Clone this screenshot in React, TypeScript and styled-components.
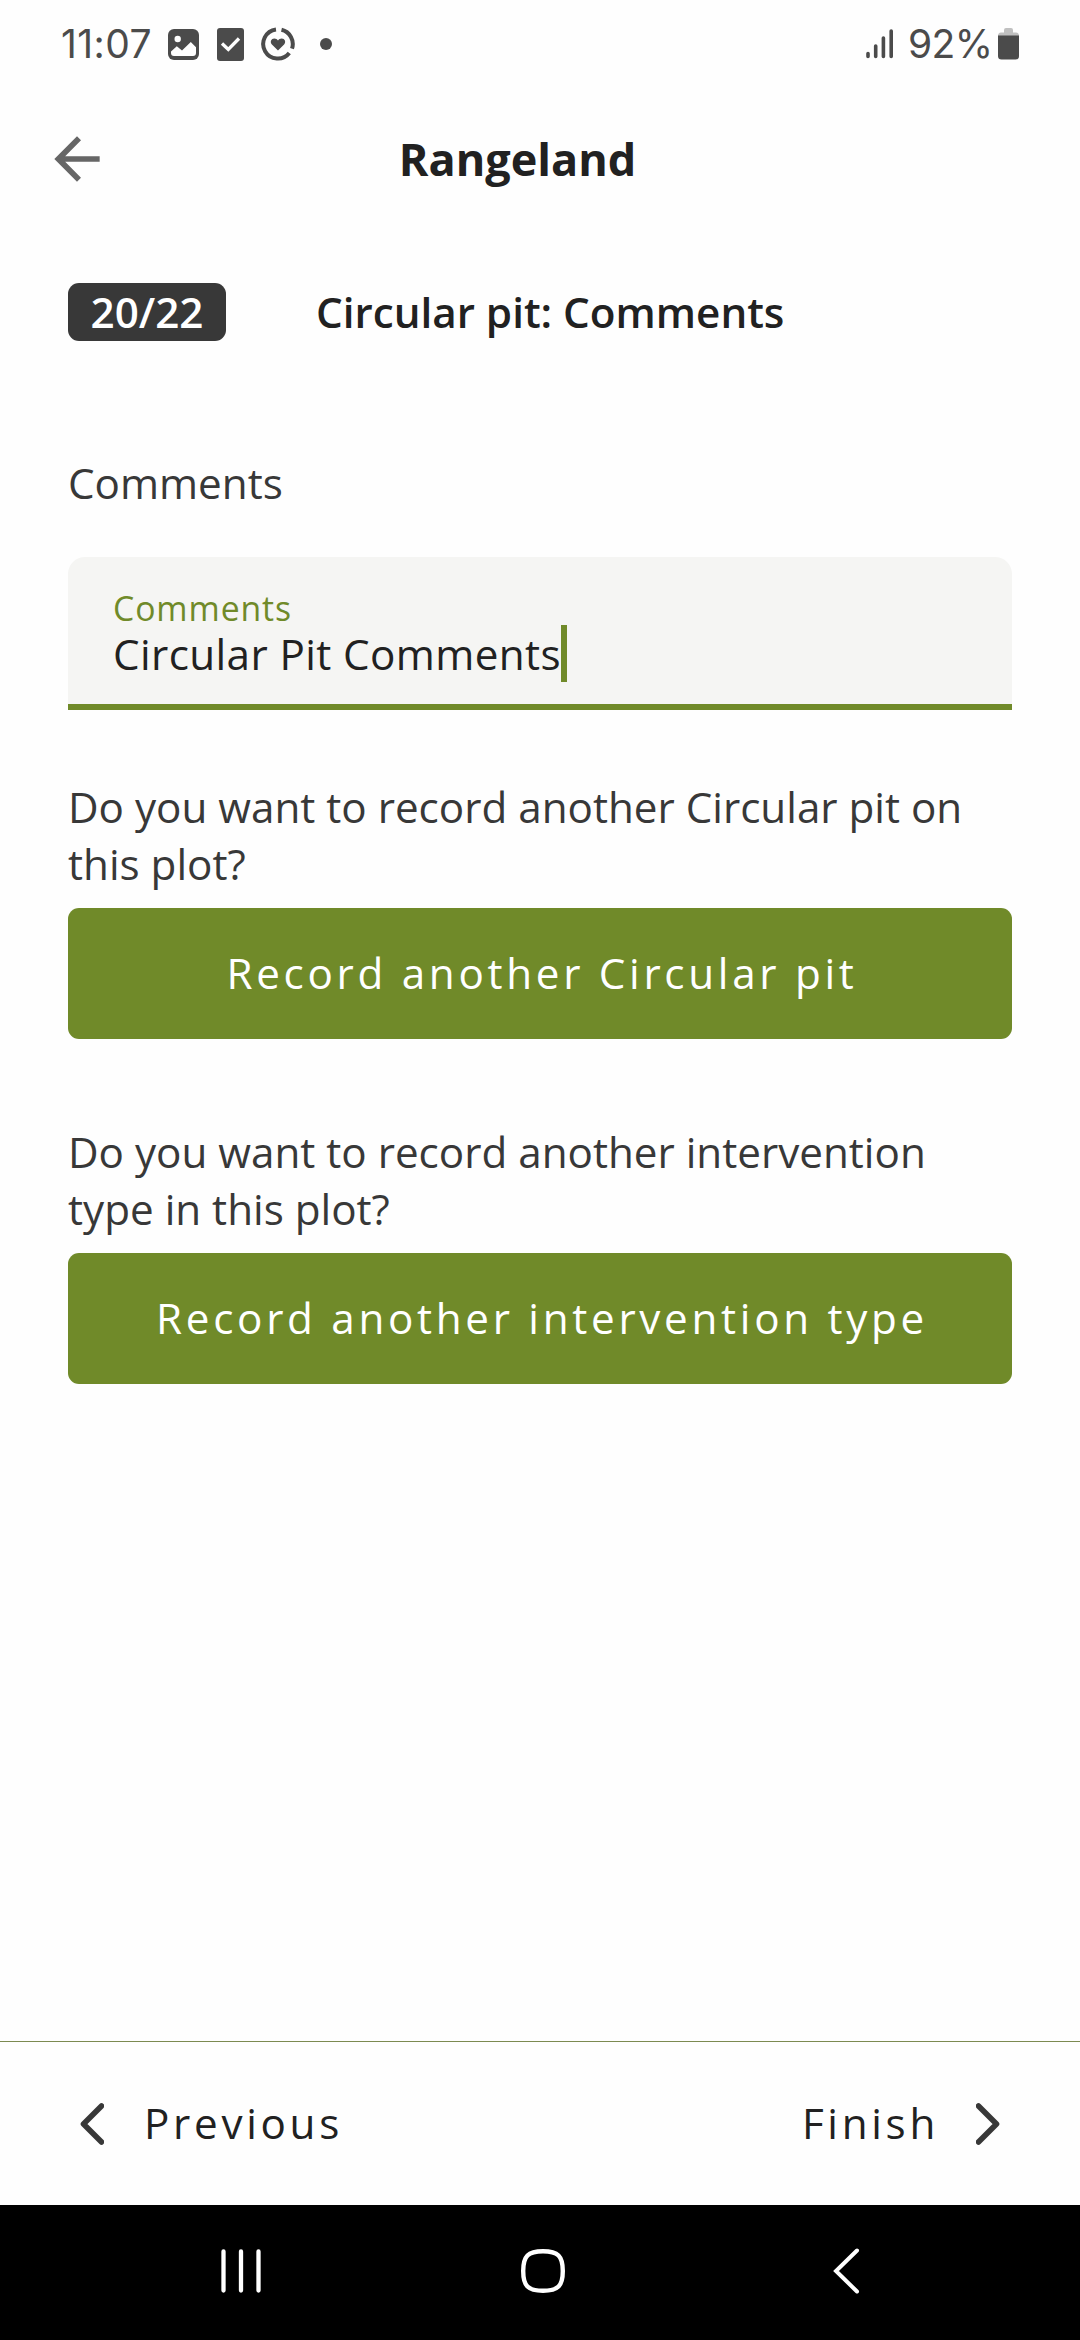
import React from "react";
import styled, { createGlobalStyle } from "styled-components";

const GlobalStyle = createGlobalStyle`
  * { box-sizing: border-box; }
  body { margin: 0; background: #fefefe; font-family: "Open Sans", "Noto Sans", sans-serif; }
`;

const Screen = styled.div`
  width: 1080px;
  height: 2340px;
  display: flex;
  flex-direction: column;
  background: #fefefe;
  overflow: hidden;
`;

const StatusBar = styled.div`
  height: 88px;
  flex: none;
  display: flex;
  align-items: center;
  justify-content: space-between;
  padding: 0 61px 0 61px;
  color: #4b4b4b;
`;

const StatusGroup = styled.div`
  display: flex;
  align-items: center;
`;

const StatusText = styled.span<{ $width: number; $spacing: number }>`
  width: ${(p) => p.$width}px;
  font-family: Inter, Roboto, sans-serif;
  font-size: 39px;
  font-weight: 400;
  line-height: 48px;
  letter-spacing: ${(p) => p.$spacing}px;
  white-space: nowrap;
`;

const Glyph = styled.svg<{ $ml?: number }>`
  display: block;
  flex: none;
  margin-left: ${(p) => p.$ml ?? 0}px;
`;

const Header = styled.header`
  height: 142px;
  flex: none;
  display: grid;
  grid-template-columns: 80px 1fr 80px;
  align-items: center;
  padding: 0 44px 0 43px;
`;

const BackButton = styled.button`
  border: 0;
  padding: 0;
  background: none;
  display: flex;
`;

const Title = styled.h1`
  margin: 0 44px 2px 0;
  text-align: center;
  font-size: 45px;
  line-height: 61px;
  font-weight: 700;
  color: #212121;
`;

const Main = styled.main`
  flex: 1;
  padding: 53px 68px 0;
`;

const StepRow = styled.div`
  display: flex;
  align-items: center;
  height: 58px;
`;

const Badge = styled.span`
  width: 158px;
  height: 58px;
  border-radius: 11px;
  background: #383838;
  color: #fff;
  font-size: 42.2px;
  font-weight: 600;
  line-height: 58px;
  text-align: center;
`;

const StepTitle = styled.h2`
  margin: 0 0 0 90px;
  color: #212121;
  font-size: 42.2px;
  font-weight: 600;
  line-height: 58px;
`;

const Label = styled.p`
  margin: 113px 0 0;
  color: #383838;
  font-size: 42.2px;
  line-height: 57px;
`;

const Field = styled.div`
  margin-top: 46px;
  height: 153px;
  padding: 33px 47px 0 45px;
  border-radius: 17px 17px 0 0;
  border-bottom: 6px solid #708a29;
  background: #f5f5f3;
`;

const FieldLabel = styled.div`
  height: 35px;
  color: #708a29;
  font-size: 33.75px;
  line-height: 36px;
  letter-spacing: 0.9px;
`;

const FieldValue = styled.div`
  display: flex;
  height: 57px;
  color: #212121;
  font-size: 42.2px;
  line-height: 57px;
  letter-spacing: 0.4px;
`;

const Caret = styled.span`
  width: 6px;
  height: 57px;
  background: #708a29;
`;

const Prompt = styled.p<{ $mt: number }>`
  margin: ${(p) => p.$mt}px 0 0;
  color: #383838;
  font-size: 42.2px;
  line-height: 57px;
  white-space: pre-line;
`;

const Action = styled.button`
  display: block;
  width: 100%;
  height: 131px;
  margin-top: 16px;
  padding: 0 0 2px 4px;
  border: 0;
  border-radius: 11px;
  background: #708a29;
  color: #fff;
  font-family: inherit;
  font-size: 42.2px;
  line-height: 57px;
  letter-spacing: 3.7px;
`;

const Footer = styled.footer`
  height: 164px;
  flex: none;
  display: flex;
  align-items: center;
  justify-content: space-between;
  padding: 0 80px;
  border-top: 1px solid #7c8a50;
`;

const StepButton = styled.button<{ $gap: number }>`
  display: flex;
  align-items: center;
  gap: ${(p) => p.$gap}px;
  border: 0;
  padding: 0;
  background: none;
  color: #212121;
  font-family: inherit;
  font-size: 42.2px;
  line-height: 57px;
  letter-spacing: 3.7px;
`;

const StepText = styled.span`
  padding-bottom: 2px;
`;

const NavBar = styled.nav`
  height: 135px;
  flex: none;
  display: grid;
  grid-template-columns: 44px 44px 44px;
  justify-content: center;
  column-gap: 258px;
  align-items: center;
  padding: 0 0 3px 6px;
  background: #000;
`;

export default function App() {
  return (
    <Screen>
      <GlobalStyle />
      <StatusBar>
        <StatusGroup>
          <StatusText $width={107} $spacing={0.4}>11:07</StatusText>
          <Glyph width="31" height="31" viewBox="0 0 31 31">
            <rect width="31" height="31" rx="6" fill="#4b4b4b" />
            <circle cx="9.7" cy="10" r="3.2" fill="#fefefe" />
            <path d="M3 22.5L8.8 17.3L14 21.5L22.8 13L28 18.200V24Q28 27 25 27H6Q3 27 3 24Z" fill="#fefefe" />
          </Glyph>
          <Glyph $ml={18} width="27" height="33" viewBox="0 0 27 33">
            <rect width="27" height="33" rx="3" fill="#4b4b4b" />
            <path d="M5 15.500L11.300 21.500L22 10.500" fill="none" stroke="#fefefe" strokeWidth="3.300" />
          </Glyph>
          <Glyph $ml={17} width="34" height="34" viewBox="0 0 34 34">
            <path d="M15 2.500A14.600 14.600 0 1 0 28.300 26" fill="none" stroke="#4b4b4b" strokeWidth="4" />
            <path d="M20.500 2.800A14.600 14.600 0 0 1 31 21.700" fill="none" stroke="#4b4b4b" strokeWidth="4" />
            <path d="M17 23.500L10.900 17.400C8.600 14.600 10.300 11.400 13.200 11.400C15 11.400 16.300 12.300 17 13.400C17.700 12.300 19 11.400 20.800 11.400C23.700 11.400 25.400 14.600 23.100 17.400Z" fill="#4b4b4b" />
          </Glyph>
          <Glyph $ml={25} width="12" height="12" viewBox="0 0 12 12">
            <circle cx="6" cy="6" r="6" fill="#4b4b4b" />
          </Glyph>
        </StatusGroup>
        <StatusGroup>
          <Glyph width="28" height="30" viewBox="0 0 28 30">
            <path d="M2 24.5V27.5M9.7 17V27.5M17.4 9V27.5M25.2 2V27.5" stroke="#4b4b4b" strokeWidth="3.6" strokeLinecap="round" />
          </Glyph>
          <Glyph width="14" height="2" />
          <StatusText $width={90} $spacing={-0.6}>92%</StatusText>
          <Glyph width="21" height="32" viewBox="0 0 21 32">
            <path d="M6 2Q6 0 8 0H13Q15 0 15 2V4.500H18Q21 4.500 21 8H0Q0 4.500 3 4.500H6Z" fill="#c0c0c0" />
            <path d="M0 7.500H21V28Q21 31.500 17.500 31.500H3.500Q0 31.500 0 28Z" fill="#4b4b4b" />
          </Glyph>
        </StatusGroup>
      </StatusBar>

      <Header>
        <BackButton aria-label="Back">
          <Glyph width="68" height="68" viewBox="0 0 24 24">
            <path d="M20 11H7.830l5.590-5.590L12 4l-8 8 8 8 1.410-1.410L7.830 13H20v-2z" fill="#666" />
          </Glyph>
        </BackButton>
        <Title>Rangeland</Title>
      </Header>

      <Main>
        <StepRow>
          <Badge>20/22</Badge>
          <StepTitle>Circular pit: Comments</StepTitle>
        </StepRow>
        <Label>Comments</Label>
        <Field>
          <FieldLabel>Comments</FieldLabel>
          <FieldValue>
            Circular Pit Comments
            <Caret />
          </FieldValue>
        </Field>
        <Prompt $mt={68}>{"Do you want to record another Circular pit on\nthis plot?"}</Prompt>
        <Action>Record another Circular pit</Action>
        <Prompt $mt={84}>{"Do you want to record another intervention\ntype in this plot?"}</Prompt>
        <Action>Record another intervention type</Action>
      </Main>

      <Footer>
        <StepButton $gap={40}>
          <Glyph width="24" height="42" viewBox="0 0 24 42">
            <path d="M21.500 3L3.500 21L21.500 39" fill="none" stroke="#383838" strokeWidth="5.600" strokeLinecap="round" strokeLinejoin="round" />
          </Glyph>
          <StepText>Previous</StepText>
        </StepButton>
        <StepButton $gap={37}>
          <StepText>Finish</StepText>
          <Glyph width="24" height="42" viewBox="0 0 24 42">
            <path d="M2.500 3L20.500 21L2.500 39" fill="none" stroke="#383838" strokeWidth="5.600" strokeLinecap="round" strokeLinejoin="round" />
          </Glyph>
        </StepButton>
      </Footer>

      <NavBar>
        <Glyph width="44" height="44" viewBox="0 0 44 44">
          <path d="M4.500 2.500V41.500M22 2.500V41.500M39.500 2.500V41.500" stroke="#fff" strokeWidth="4.300" strokeLinecap="round" />
        </Glyph>
        <Glyph width="44" height="44" viewBox="0 0 44 44">
          <path d="M22 2.200C37 2.200 41.800 7 41.800 22S37 41.800 22 41.800S2.200 37 2.200 22S7 2.200 22 2.200Z" fill="none" stroke="#fff" strokeWidth="4.400" />
        </Glyph>
        <Glyph width="44" height="46" viewBox="0 0 44 46">
          <path d="M34 2.500L13 23L34 43.500" fill="none" stroke="#fff" strokeWidth="4" strokeLinecap="round" />
        </Glyph>
      </NavBar>
    </Screen>
  );
}
